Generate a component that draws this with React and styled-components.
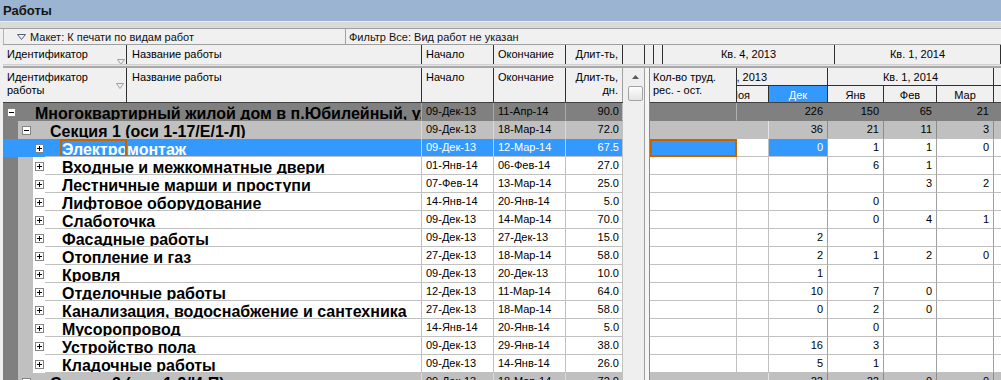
import React from 'react';
import styled, { createGlobalStyle } from 'styled-components';

const GlobalStyle = createGlobalStyle`
  html, body { margin: 0; padding: 0; background: #f0f0f0; overflow: hidden; }
  body { font-family: 'Liberation Sans', Arial, sans-serif; font-size: 11px; color: #000; }
  * { box-sizing: border-box; }
`;

const BLUE = '#3399ff';
const ORANGE = '#c86400';
const DARK = '#808080';
const LIGHT = '#c0c0c0';
const SCROLL_X = 85;

const months = [
  { key: 'Окт', w: 60 },
  { key: 'Ноя', w: 57 },
  { key: 'Дек', w: 59, active: true },
  { key: 'Янв', w: 56 },
  { key: 'Фев', w: 53 },
  { key: 'Мар', w: 57 },
  { key: 'Апр', w: 57 },
];
const quarters = [
  { label: 'Кв. 4, 2013', w: 176 },
  { label: 'Кв. 1, 2014', w: 166 },
  { label: 'Кв. 2, 2014', w: 171 },
];

const rows = [
  { kind: 'top', level: 0, name: 'Многоквартирный жилой дом в п.Юбилейный, ул. Лесная', start: '09-Дек-13', end: '11-Апр-14', dur: '90.0', m: { Дек: '226', Янв: '150', Фев: '65', Мар: '21' } },
  { kind: 'group', level: 1, name: 'Секция 1 (оси 1-17/Е/1-Л)', start: '09-Дек-13', end: '18-Мар-14', dur: '72.0', m: { Дек: '36', Янв: '21', Фев: '11', Мар: '3' } },
  { kind: 'sel', level: 2, name: 'Электромонтаж', start: '09-Дек-13', end: '12-Мар-14', dur: '67.5', m: { Дек: '0', Янв: '1', Фев: '1', Мар: '0' } },
  { kind: 'item', level: 2, name: 'Входные и межкомнатные двери', start: '01-Янв-14', end: '06-Фев-14', dur: '27.0', m: { Янв: '6', Фев: '1' } },
  { kind: 'item', level: 2, name: 'Лестничные марши и проступи', start: '07-Фев-14', end: '13-Мар-14', dur: '25.0', m: { Фев: '3', Мар: '2' } },
  { kind: 'item', level: 2, name: 'Лифтовое оборудование', start: '14-Янв-14', end: '20-Янв-14', dur: '5.0', m: { Янв: '0' } },
  { kind: 'item', level: 2, name: 'Слаботочка', start: '09-Дек-13', end: '14-Мар-14', dur: '70.0', m: { Янв: '0', Фев: '4', Мар: '1' } },
  { kind: 'item', level: 2, name: 'Фасадные работы', start: '09-Дек-13', end: '27-Дек-13', dur: '15.0', m: { Дек: '2' } },
  { kind: 'item', level: 2, name: 'Отопление и газ', start: '27-Дек-13', end: '18-Мар-14', dur: '58.0', m: { Дек: '2', Янв: '1', Фев: '2', Мар: '0' } },
  { kind: 'item', level: 2, name: 'Кровля', start: '09-Дек-13', end: '20-Дек-13', dur: '10.0', m: { Дек: '1' } },
  { kind: 'item', level: 2, name: 'Отделочные работы', start: '12-Дек-13', end: '11-Мар-14', dur: '64.0', m: { Дек: '10', Янв: '7', Фев: '0' } },
  { kind: 'item', level: 2, name: 'Канализация, водоснабжение и сантехника', start: '27-Дек-13', end: '18-Мар-14', dur: '58.0', m: { Дек: '0', Янв: '2', Фев: '0' } },
  { kind: 'item', level: 2, name: 'Мусоропровод', start: '14-Янв-14', end: '20-Янв-14', dur: '5.0', m: { Янв: '0' } },
  { kind: 'item', level: 2, name: 'Устройство пола', start: '09-Дек-13', end: '29-Янв-14', dur: '38.0', m: { Дек: '16', Янв: '3' } },
  { kind: 'item', level: 2, name: 'Кладочные работы', start: '09-Дек-13', end: '14-Янв-14', dur: '26.0', m: { Дек: '5', Янв: '1' } },
  { kind: 'group', level: 1, name: 'Секция 2 (оси 1-9/И-П)', start: '09-Дек-13', end: '18-Мар-14', dur: '72.0', m: { Дек: '22', Янв: '22', Фев: '0', Мар: '0' } },
];

const themes = {
  top: { bg: DARK, fg: '#000', v: '#a8a8a8', h: DARK, ind0: DARK, ind1: DARK },
  group: { bg: LIGHT, fg: '#000', v: '#dadada', h: LIGHT, ind0: DARK, ind1: LIGHT },
  sel: { bg: BLUE, fg: '#fff', v: '#a8d2ff', h: LIGHT, ind0: BLUE, ind1: BLUE },
  item: { bg: '#fff', fg: '#000', v: LIGHT, h: LIGHT, ind0: DARK, ind1: LIGHT },
};

/* ---------- window chrome ---------- */
const Window = styled.div`
  width: 1001px;
  height: 380px;
  overflow: hidden;
  display: flex;
  flex-direction: column;
  background: #f0f0f0;
`;

const TitleBar = styled.div`
  flex: none;
  height: 21px;
  background: #9bb4d2;
  display: flex;
  align-items: center;
  padding-left: 3px;
  font-size: 13px;
  font-weight: bold;
  color: #141414;
`;

const TitleGap = styled.div`
  flex: none;
  height: 8px;
  background: #dadada;
  border-top: 1px solid #e8eef5;
  border-bottom: 1px solid #a0a0a0;
`;

const Frame = styled.div`
  flex: 1;
  min-height: 0;
  display: flex;
  flex-direction: column;
  padding-left: 3px;
`;

const Toolbar = styled.div`
  flex: none;
  height: 15px;
  display: flex;
  background: #f0f0f0;
  font-size: 11px;
  line-height: 14px;
`;

const LayoutBox = styled.div`
  width: 342px;
  display: flex;
  align-items: center;
  gap: 4px;
  padding-left: 13px;
  border-left: 1px solid #b4b4b4;
  color: #111;
`;

const FilterBox = styled.div`
  flex: 1;
  display: flex;
  align-items: center;
  padding-left: 3px;
  border-left: 1px solid #a0a0a0;
  color: #111;
`;

/* ---------- headers ---------- */
const PrintHeader = styled.div`
  flex: none;
  height: 21px;
  display: flex;
  background: #f0f0f0;
  border-top: 1px solid #a0a0a0;
  border-bottom: 1px solid #cfcfcf;
`;

const PCell = styled.div`
  flex: ${p => (p.$w ? 'none' : '1')};
  width: ${p => (p.$w ? `${p.$w}px` : 'auto')};
  height: 100%;
  display: flex;
  align-items: center;
  justify-content: ${p => (p.$align === 'right' ? 'flex-end' : p.$align === 'center' ? 'center' : 'space-between')};
  padding: 0 ${p => p.$pr ?? 4}px 0 ${p => p.$pl ?? 4}px;
  border-right: ${p => (p.$w ? '1px solid #303030' : 'none')};
  line-height: 13px;
  white-space: nowrap;
  overflow: hidden;
`;

const Divider = styled.div`
  flex: none;
  height: 3px;
  background: #a8a8a8;
  border-top: 1px solid #e6e6e6;
`;

const Main = styled.div`
  flex: 1;
  min-height: 0;
  display: flex;
  overflow: hidden;
`;

const LeftPane = styled.div`
  flex: none;
  width: 620px;
  display: flex;
  flex-direction: column;
  background: #fff;
  overflow: hidden;
`;

const ColHeader = styled.div`
  flex: none;
  height: 35px;
  display: flex;
  background: #f0f0f0;
  border-bottom: 1px solid #404040;
`;

const HCell = styled.div`
  flex: none;
  width: ${p => p.$w}px;
  height: 100%;
  display: flex;
  justify-content: ${p => (p.$right ? 'flex-end' : 'space-between')};
  text-align: ${p => (p.$right ? 'right' : 'left')};
  padding: 3px ${p => p.$pr ?? 4}px 0 ${p => p.$pl ?? 4}px;
  border-right: 1px solid ${p => p.$line ?? '#303030'};
  line-height: 13px;
  overflow: hidden;
`;

const SortMark = styled.span`
  flex: none;
  display: flex;
  align-self: ${p => p.$pos};
  margin-bottom: ${p => (p.$pos === 'flex-end' ? '-1px' : '2px')};
`;

/* ---------- left data ---------- */
const Row = styled.div`
  flex: none;
  height: 18px;
  display: flex;
`;

const NameCell = styled.div`
  flex: none;
  width: 419px;
  height: 100%;
  display: flex;
  border-right: 1px solid ${p => p.$v};
  overflow: hidden;
`;

const Indent = styled.div`
  flex: none;
  width: 15px;
  height: 100%;
  background: ${p => p.$bg};
`;

const NameBody = styled.div`
  flex: 1;
  min-width: 0;
  height: 100%;
  display: flex;
  background: ${p => p.$bg};
`;

const Toggle = styled.span`
  flex: none;
  width: 9px;
  height: 9px;
  margin: 5px 0 0 ${p => p.$ml}px;
  border: 1px solid #848484;
  background: #fff;
  display: flex;
  align-items: center;
  justify-content: center;
`;

const Label = styled.div`
  position: relative;
  flex: 1;
  min-width: 0;
  height: 100%;
  margin-left: ${p => p.$ml}px;
  padding: 2px 0 0 ${p => p.$pl}px;
  border-bottom: 1px solid ${p => p.$h};
  color: ${p => p.$fg};
  font-size: 16px;
  font-weight: bold;
  line-height: 18px;
  white-space: nowrap;
  overflow: hidden;
`;

const FocusRing = styled.span`
  position: absolute;
  left: 15px;
  top: 0;
  width: 67px;
  height: 18px;
  border: 2px solid ${ORANGE};
`;

const DataCell = styled.div`
  flex: none;
  width: ${p => p.$w}px;
  height: 100%;
  background: ${p => p.$bg};
  color: ${p => p.$fg};
  border-right: 1px solid ${p => p.$v};
  border-bottom: 1px solid ${p => p.$h};
  padding: 0 ${p => p.$pr ?? 4}px 0 4px;
  text-align: ${p => (p.$right ? 'right' : 'left')};
  line-height: 17px;
  white-space: nowrap;
  overflow: hidden;
`;

/* ---------- scrollbar / splitter ---------- */
const ScrollBar = styled.div`
  flex: none;
  width: 22px;
  display: flex;
  flex-direction: column;
  align-items: center;
  padding-left: 3px;
  background: #efefef;
  border-right: 1px solid #a0a0a0;
`;

const ScrollArrow = styled.div`
  flex: none;
  height: 18px;
  display: flex;
  align-items: center;
  justify-content: center;
`;

const ScrollThumb = styled.div`
  flex: none;
  width: 15px;
  height: 15px;
  border: 1px solid #a4a4a4;
  border-radius: 2px;
  background: linear-gradient(#fdfdfd, #e4e4e4);
`;

const Splitter = styled.div`
  flex: none;
  width: 5px;
  background: #f6f6f6;
  border-right: 1px solid #8a8a8a;
`;

/* ---------- right timeline ---------- */
const RightPane = styled.div`
  flex: 1;
  min-width: 0;
  display: flex;
  flex-direction: column;
  background: #fff;
  overflow: hidden;
`;

const KolHead = styled.div`
  flex: none;
  width: 87px;
  height: 100%;
  padding: 3px 0 0 3px;
  border-right: 1px solid #303030;
  line-height: 13px;
  white-space: nowrap;
  overflow: hidden;
`;

const Viewport = styled.div`
  flex: 1;
  min-width: 0;
  height: 100%;
  overflow: hidden;
`;

const Track = styled.div`
  display: flex;
  flex-direction: ${p => (p.$col ? 'column' : 'row')};
  height: 100%;
  margin-left: -${p => p.$offset}px;
`;

const BandRow = styled.div`
  display: flex;
  height: ${p => p.$h}px;
  border-bottom: ${p => (p.$line ? '1px solid #303030' : 'none')};
`;

const BandCell = styled.div`
  flex: none;
  width: ${p => p.$w}px;
  height: 100%;
  text-align: center;
  padding-top: ${p => p.$pt}px;
  line-height: 15px;
  white-space: nowrap;
  border-right: 1px solid #303030;
  background: ${p => (p.$active ? BLUE : 'transparent')};
  color: ${p => (p.$active ? '#fff' : '#000')};
`;

const KolCell = styled.div`
  flex: none;
  width: 87px;
  height: 100%;
  background: ${p => p.$bg};
  border-right: 1px solid ${p => p.$v};
  border-bottom: 1px solid ${p => p.$h};
  ${p => (p.$focus ? `border: 2px solid ${ORANGE};` : '')}
`;

const Num = styled.div`
  flex: none;
  width: ${p => p.$w}px;
  height: 100%;
  background: ${p => p.$bg};
  color: ${p => p.$fg};
  border-right: 1px solid ${p => p.$v};
  border-bottom: 1px solid ${p => p.$h};
  padding-right: 4px;
  text-align: right;
  line-height: 17px;
  white-space: nowrap;
`;

/* ---------- small drawings ---------- */
const Tri = ({ color = '#a0a0a0', w = 8, h = 6 }) => (
  <svg width={w} height={h} viewBox={`0 0 ${w} ${h}`}>
    <path d={`M0.5 0.5 L${w - 0.5} 0.5 L${w / 2} ${h - 0.5} Z`} fill="none" stroke={color} strokeWidth="1" />
  </svg>
);

const Sign = ({ plus }) => (
  <svg width="5" height="5" viewBox="0 0 5 5" shapeRendering="crispEdges">
    <rect x="0" y="2" width="5" height="1" fill="#000" />
    {plus && <rect x="2" y="0" width="1" height="5" fill="#000" />}
  </svg>
);

function rightColors(kind, key) {
  if (kind === 'top') return { bg: DARK, fg: '#000', v: DARK, h: DARK };
  if (kind === 'group') return { bg: LIGHT, fg: '#000', v: key === 'Ноя' ? '#e4e4e4' : '#8c8c8c', h: LIGHT };
  if (kind === 'sel' && key === 'Дек') return { bg: BLUE, fg: '#fff', v: '#a0a0a0', h: LIGHT };
  return { bg: '#fff', fg: '#000', v: key === 'Ноя' ? LIGHT : '#a0a0a0', h: LIGHT };
}

function kolColors(kind) {
  if (kind === 'top') return { bg: DARK, v: '#b0b0b0', h: DARK };
  if (kind === 'group') return { bg: LIGHT, v: LIGHT, h: LIGHT };
  if (kind === 'sel') return { bg: BLUE, v: LIGHT, h: LIGHT };
  return { bg: '#fff', v: LIGHT, h: LIGHT };
}

function LeftRow({ r }) {
  const t = themes[r.kind];
  const cfg = [
    { ml: 4, lm: 0, pl: 19 },
    { ml: 4, lm: 0, pl: 19 },
    { ml: 2, lm: 1, pl: 17 },
  ][r.level];
  return (
    <Row>
      <NameCell $v={t.v}>
        {r.level >= 1 && <Indent $bg={t.ind0} />}
        {r.level >= 2 && <Indent $bg={t.ind1} />}
        <NameBody $bg={t.bg}>
          <Toggle $ml={cfg.ml}>
            <Sign plus={r.level === 2} />
          </Toggle>
          <Label $ml={cfg.lm} $pl={cfg.pl} $fg={t.fg} $h={r.level === 2 ? LIGHT : t.bg}>
            {r.name}
            {r.kind === 'sel' && <FocusRing />}
          </Label>
        </NameBody>
      </NameCell>
      <DataCell $w={72} $bg={t.bg} $fg={t.fg} $v={t.v} $h={t.h}>{r.start}</DataCell>
      <DataCell $w={72} $bg={t.bg} $fg={t.fg} $v={t.v} $h={t.h}>{r.end}</DataCell>
      <DataCell $w={57} $bg={t.bg} $fg={t.fg} $v={LIGHT} $h={t.h} $right $pr={3}>{r.dur}</DataCell>
    </Row>
  );
}

function RightRow({ r }) {
  const k = kolColors(r.kind);
  return (
    <Row>
      <KolCell $bg={k.bg} $v={k.v} $h={k.h} $focus={r.kind === 'sel'} />
      <Viewport>
        <Track $offset={SCROLL_X}>
          {months.map(m => {
            const c = rightColors(r.kind, m.key);
            return (
              <Num key={m.key} $w={m.w} $bg={c.bg} $fg={c.fg} $v={c.v} $h={c.h}>
                {r.m[m.key] || ''}
              </Num>
            );
          })}
        </Track>
      </Viewport>
    </Row>
  );
}

export default function App() {
  return (
    <>
      <GlobalStyle />
      <Window>
        <TitleBar>Работы</TitleBar>
        <TitleGap />
        <Frame>
          <Toolbar>
            <LayoutBox>
              <Tri color="#51607a" w={9} h={6} />
              <span>Макет: К печати по видам работ</span>
            </LayoutBox>
            <FilterBox>Фильтр Все: Вид работ не указан</FilterBox>
          </Toolbar>

          <PrintHeader>
            <PCell $w={124} $pr={1}>
              <span>Идентификатор</span>
              <SortMark $pos="flex-end"><Tri /></SortMark>
            </PCell>
            <PCell $w={295} $pl={5}>Название работы</PCell>
            <PCell $w={72}>Начало</PCell>
            <PCell $w={72}>Окончание</PCell>
            <PCell $w={57} $align="right" $pr={4}>Длит-ть,</PCell>
            <PCell $w={22} />
            <PCell $w={5} />
            <PCell $w={6} />
            <PCell $w={172} $align="center">Кв. 4, 2013</PCell>
            <PCell $w={166} $align="center">Кв. 1, 2014</PCell>
            <PCell />
          </PrintHeader>
          <Divider />

          <Main>
            <LeftPane>
              <ColHeader>
                <HCell $w={124} $pr={2}>
                  <span>Идентификатор<br />работы</span>
                  <SortMark $pos="center"><Tri /></SortMark>
                </HCell>
                <HCell $w={295} $pl={5}>Название работы</HCell>
                <HCell $w={72}>Начало</HCell>
                <HCell $w={72}>Окончание</HCell>
                <HCell $w={57} $right $line="#a0a0a0">Длит-ть,<br />дн.</HCell>
              </ColHeader>
              {rows.map((r, i) => (
                <LeftRow key={i} r={r} />
              ))}
            </LeftPane>

            <ScrollBar>
              <ScrollArrow>
                <svg width="7" height="4" viewBox="0 0 7 4">
                  <path d="M3.5 0 L7 4 L0 4 Z" fill="#5a5a5a" />
                </svg>
              </ScrollArrow>
              <ScrollThumb />
            </ScrollBar>
            <Splitter />

            <RightPane>
              <ColHeader>
                <KolHead>Кол-во труд.<br />рес. - ост.</KolHead>
                <Viewport>
                  <Track $col $offset={SCROLL_X}>
                    <BandRow $h={18} $line>
                      {quarters.map(q => (
                        <BandCell key={q.label} $w={q.w} $pt={2}>{q.label}</BandCell>
                      ))}
                    </BandRow>
                    <BandRow $h={16}>
                      {months.map(m => (
                        <BandCell key={m.key} $w={m.w} $pt={2} $active={m.active}>{m.key}</BandCell>
                      ))}
                    </BandRow>
                  </Track>
                </Viewport>
              </ColHeader>
              {rows.map((r, i) => (
                <RightRow key={i} r={r} />
              ))}
            </RightPane>
          </Main>
        </Frame>
      </Window>
    </>
  );
}
